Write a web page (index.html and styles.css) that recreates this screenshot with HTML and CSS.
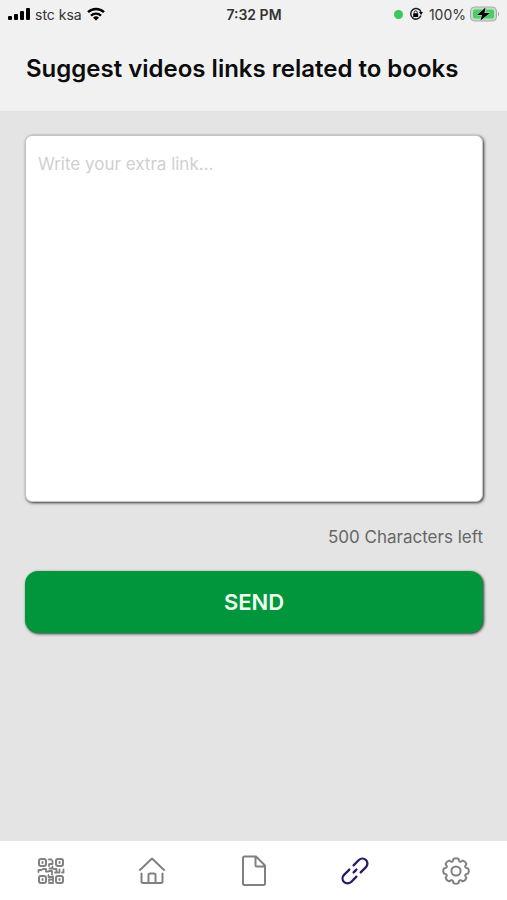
FILE: index.html
```html
<!DOCTYPE html>
<html lang="en">
<head>
<meta charset="utf-8">
<meta name="viewport" content="width=device-width, initial-scale=1">
<title>Suggest videos links</title>
<link rel="stylesheet" href="styles.css">
</head>
<body>
<div class="status">
  <div class="status-side">
    <svg width="22" height="14" viewBox="0 0 22 14" aria-hidden="true"><rect x="0" y="9" width="4" height="4" rx="1"/><rect x="6" y="7" width="4" height="6" rx="1"/><rect x="12" y="4" width="4" height="9" rx="1"/><rect x="18" y="1" width="4" height="12" rx="1"/></svg>
    <span>stc ksa</span>
    <svg width="18" height="14" viewBox="0 0 18 14" aria-hidden="true"><g fill="none" stroke="#000" stroke-width="2.4"><path d="M1 5.2a11.5 11.5 0 0 1 16 0"/><path d="M4 8.6a7.2 7.2 0 0 1 10 0"/></g><path d="M9 13.6 6 10.7a4.4 4.4 0 0 1 6 0z"/></svg>
  </div>
  <time class="clock">7:32 PM</time>
  <div class="status-side status-end">
    <span class="dot"></span>
    <svg class="lock" width="14" height="14" viewBox="0 0 14 14" aria-hidden="true"><path d="M12 8.6A5.3 5.3 0 1 1 12 5" fill="none" stroke="#222" stroke-width="1.5"/><path d="M10 5h4l-2 3z"/><rect x="4.2" y="6.2" width="5" height="3.8" rx=".6"/><path d="M5.2 6.5V5.4a1.5 1.5 0 0 1 3 0v1.1" fill="none" stroke="#222"/></svg>
    <span>100%</span>
    <svg width="30" height="16" viewBox="0 0 30 16" aria-hidden="true"><rect x=".5" y="1" width="26" height="14" rx="4" fill="#c9d8cb" stroke="#a5b0a6"/><rect x="3" y="3.500" width="21" height="9" rx="2" fill="#45d062"/><path d="M28 5.500q2 2.500 0 5z" fill="#9a9f9b"/><path d="M15.5 1.500 7 9h5l-1.500 5.500L20 7h-5.500z" stroke="#d3ddd4" stroke-width="1" paint-order="stroke"/></svg>
  </div>
</div>
<header class="header"><h1>Suggest videos links related to books</h1></header>
<main class="content">
  <form class="form">
    <textarea aria-label="Extra link" maxlength="500" placeholder="Write your extra link..."></textarea>
    <p class="count">500 Characters left</p>
    <button class="send" type="button">SEND</button>
  </form>
</main>
<nav class="tabs" aria-label="Main">
  <a href="#qr" aria-label="QR code"><svg width="32" height="32" viewBox="0 0 32 32"><g stroke-width="2"><rect x="4" y="4" width="7" height="7" rx="2"/><rect x="21" y="4" width="7" height="7" rx="2"/><rect x="4" y="21" width="7" height="7" rx="2"/><rect x="21" y="21" width="7" height="7" rx="2"/></g><path stroke-width="2" d="M7.500 7v1M24.500 7v1M7.500 24v1M24.500 24v1"/><path stroke-width="1.800" d="M14 4.500h2.500M17.500 6v3h-3M14 9.500v1.500M17.500 11.500v2h-3M3.500 17v-2h3M8 14h3v2.500h2.500M14 16h3v3.500M19 14h2.500v3M20 17.500h4.500v-3M27 17.500h1.500v-3M13.500 20v2h3.500M14.500 24.500h3.500M18 21.500v5M14 28h4M14 24.500v1.500"/></svg></a>
  <a href="#home" aria-label="Home"><svg width="32" height="32" viewBox="0 0 32 32"><path d="M4 15 16 3.500 28 15M5.500 18.500v8q0 1.500 1.500 1.500h18q1.500 0 1.500-1.500v-8M12.500 28v-8q0-1.500 1.500-1.500h4q1.500 0 1.500 1.500v8"/></svg></a>
  <a href="#files" aria-label="Documents"><svg width="32" height="32" viewBox="0 0 32 32"><path d="M6.500 1.500H18L27 10.500V28.500q0 1.500-1.500 1.500h-19Q5 30 5 28.500V3q0-1.500 1.500-1.500zM17.500 2v8q0 1.500 1.500 1.500h8"/></svg></a>
  <a class="active" href="#links" aria-label="Links" aria-current="page"><svg width="32" height="32" viewBox="0 0 32 32"><g transform="rotate(-45 16 16)" stroke-width="2.300"><path d="M13 11H5.500a5 5 0 0 0 0 10H13M19 11h7.500a5 5 0 0 1 0 10H19M14 16h4"/></g></svg></a>
  <a href="#settings" aria-label="Settings"><svg width="32" height="32" viewBox="-16 -16 32 32"><circle r="4.600"/><path d="M12.200-2.500Q13.500 0 12.200 2.500Q7.200 3 10.400 6.900Q9.600 9.600 6.900 10.400Q3 7.200 2.500 12.200Q0 13.500-2.500 12.200Q-3 7.200-6.900 10.400Q-9.600 9.600-10.400 6.900Q-7.200 3-12.200 2.500Q-13.500 0-12.200-2.500Q-7.200-3-10.400-6.900Q-9.600-9.600-6.900-10.400Q-3-7.200-2.500-12.200Q0-13.500 2.500-12.200Q3-7.200 6.900-10.400Q9.600-9.600 10.400-6.900Q7.200-3 12.200-2.500z"/></svg></a>
</nav>
</body>
</html>
```
FILE: styles.css
```css
* {
  box-sizing: border-box;
}

body {
  margin: 0;
  min-height: 100vh;
  display: flex;
  flex-direction: column;
  background: #e4e4e4;
  color: #0c0c0c;
  font-family: Inter, "Liberation Sans", sans-serif;
}

.status {
  display: grid;
  grid-template-columns: 1fr auto 1fr;
  align-items: center;
  height: 28px;
  padding: 0 7px 0 8px;
  background: #f1f1f1;
  font-size: 14px;
  color: #333;
}

.status-side {
  display: flex;
  align-items: center;
  gap: 5px;
}

.status-end {
  justify-content: flex-end;
  gap: 4px;
}

.clock {
  font-weight: 600;
}

.dot {
  width: 9px;
  height: 9px;
  border-radius: 50%;
  background: #3cc75a;
}

.lock {
  margin: 0 2px;
}

.header {
  padding: 25px 26px 26px;
  background: #f1f1f1;
}

h1 {
  margin: 0;
  font-size: 24px;
  line-height: 32px;
  font-weight: 600;
}

.content {
  flex: 1;
  padding: 24px;
}

.form {
  display: flex;
  flex-direction: column;
  padding: 0 0 0 1px;
}

textarea {
  height: 367px;
  padding: 16px 12px;
  border: 1px solid #c4c4c4;
  border-radius: 7px;
  background: #fff;
  box-shadow: 1px 1px 3px #333;
  font: 17px/24px Inter, "Liberation Sans", sans-serif;
  resize: none;
  outline: none;
}

textarea::placeholder {
  color: #d0d0d0;
}

.count {
  margin: 23px 0 22px;
  font-size: 17px;
  line-height: 24px;
  text-align: right;
  color: #666;
}

.send {
  height: 62px;
  border: 0;
  border-radius: 13px;
  background: #01963c;
  box-shadow: 1px 1px 3px #333;
  color: #effff0;
  font: 600 22px/28px Inter, "Liberation Sans", sans-serif;
}

.tabs {
  display: flex;
  height: 59px;
  background: #fff;
}

.tabs a {
  flex: 1;
  display: flex;
  align-items: center;
  justify-content: center;
  color: #808080;
}

.tabs .active {
  color: #2a1a68;
}

.tabs svg {
  fill: none;
  stroke: currentColor;
  stroke-width: 2;
  stroke-linecap: round;
  stroke-linejoin: round;
}
```
